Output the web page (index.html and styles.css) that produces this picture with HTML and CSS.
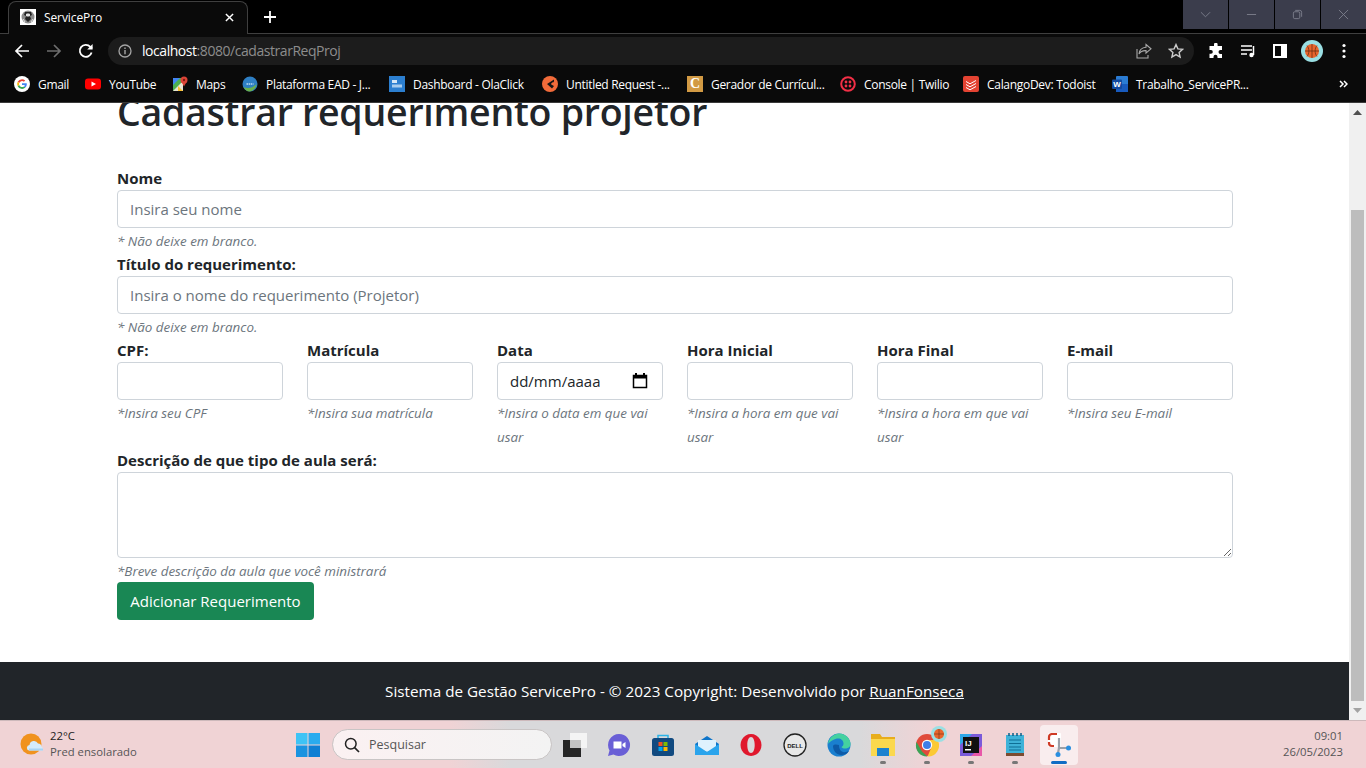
FILE: index.html
```html
<!DOCTYPE html>
<html lang="pt-BR">
<head>
    <meta charset="UTF-8">
    <meta name="viewport" content="width=device-width, initial-scale=1.0">
    <title>ServicePro</title>
    <link rel="stylesheet" href="styles.css">
</head>
<body>

    <!-- Browser tabs -->
    <div class="tabstrip">
        <div class="tab">
            <svg class="favicon" viewBox="0 0 16 16"><rect width="16" height="16" fill="#fff"/><circle cx="8" cy="8" r="6.500" fill="#8a8a8a"/><path d="M5 3h6l1 3-2 1 1 3-3 3-3-3 1-3-2-1z" fill="#222"/><path d="M6.500 5h3v2h-3zM3 10l2 3M13 10l-2 3" stroke="#e2e2e2" fill="#e2e2e2"/></svg>
            <span class="tab-title">ServicePro</span>
            <svg class="tab-close" viewBox="0 0 10 10"><path d="M1 1l8 8M9 1l-8 8" stroke="#fff" stroke-width="1.600"/></svg>
        </div>
        <svg class="new-tab" viewBox="0 0 12 12"><path d="M6 0v12M0 6h12" stroke="#fff" stroke-width="1.800"/></svg>
        <div class="window-btns">
            <div class="window-btn"><svg viewBox="0 0 12 12"><path d="M1 3.500l5 5 5-5" fill="none" stroke="#7d7f8c"/></svg></div>
            <div class="window-btn"><svg viewBox="0 0 12 12"><path d="M1 6h10" stroke="#7d7f8c"/></svg></div>
            <div class="window-btn"><svg viewBox="0 0 12 12"><rect x="1.500" y="3" width="7" height="7.500" rx="1.500" fill="none" stroke="#7d7f8c"/><path d="M3.500 1.500h5a2 2 0 0 1 2 2v5" fill="none" stroke="#7d7f8c"/></svg></div>
            <div class="window-btn"><svg viewBox="0 0 12 12"><path d="M1 1l10 10M11 1L1 11" stroke="#7d7f8c"/></svg></div>
        </div>
    </div>

    <!-- Address bar -->
    <div class="toolbar">
        <svg class="nav-icon" viewBox="0 0 16 16"><path d="M15 8H2M8 2L2 8l6 6" fill="none" stroke="#fff" stroke-width="1.700"/></svg>
        <svg class="nav-icon" viewBox="0 0 16 16"><path d="M1 8h13M8 2l6 6-6 6" fill="none" stroke="#6e6e6e" stroke-width="1.700"/></svg>
        <svg class="nav-icon" viewBox="0 0 16 16"><path d="M13.600 9.500A6 6 0 1 1 12.300 3.800L14 5.500" fill="none" stroke="#fff" stroke-width="1.800"/><path d="M14.600 1v5.400H9.200z" fill="#fff"/></svg>
        <div class="omnibox">
            <svg class="info-icon" viewBox="0 0 14 14"><circle cx="7" cy="7" r="6" fill="none" stroke="#a5a5a5" stroke-width="1.300"/><path d="M7 6v4.200M7 3.600v1.400" stroke="#a5a5a5" stroke-width="1.400"/></svg>
            <span class="url"><span class="url-host">localhost</span>:8080/cadastrarReqProj</span>
            <svg class="omni-icon" viewBox="0 0 16 16"><path d="M10 1.500l5 4.300-5 4.200V7.600C6.500 7.400 4.300 8.600 3 11c.3-3.600 2.800-6.300 7-6.700z M1 6v9h11v-3" fill="none" stroke="#a9a9a9" stroke-width="1.100"/></svg>
            <svg class="omni-icon" viewBox="0 0 16 16"><path d="M8 1.600l1.900 4.300 4.700.4-3.500 3.100 1 4.600L8 11.600 3.900 14l1-4.600L1.400 6.300l4.700-.4z" fill="none" stroke="#ccc" stroke-width="1.400"/></svg>
        </div>
        <div class="toolbar-right">
            <svg class="tool-icon" viewBox="0 0 16 16"><path d="M6 1.500a1.800 1.800 0 0 1 3.600 0V3H14v4h-1.500a2 2 0 0 0 0 4H14v4H9.500v-1.200a2 2 0 0 0-4 0V15H1.500v-4.300H3a1.800 1.800 0 0 0 0-3.600H1.500V3H6z" fill="#fff"/></svg>
            <svg class="tool-icon" viewBox="0 0 16 16"><path d="M1 3h11M1 7h11M1 11h6" stroke="#fff" stroke-width="1.500"/><path d="M13.500 3v9" stroke="#fff" stroke-width="1.500"/><circle cx="11.500" cy="12" r="2.200" fill="#fff"/></svg>
            <svg class="tool-icon" viewBox="0 0 16 16"><path d="M2 2h12v12H2z" fill="none" stroke="#fff" stroke-width="2"/><path d="M9 2h5v12H9z" fill="#fff"/></svg>
            <svg class="avatar" viewBox="0 0 22 22"><circle cx="11" cy="11" r="11" fill="#9adfe3"/><circle cx="11" cy="11" r="7" fill="#e8642c"/><path d="M4 11h14M11 4v14M6 5.500c2.500 3 2.500 8 0 11M16 5.500c-2.500 3-2.500 8 0 11" fill="none" stroke="#5b2a12" stroke-width=".7"/></svg>
            <svg class="tool-icon" viewBox="0 0 16 16"><circle cx="8" cy="2.500" r="1.600" fill="#fff"/><circle cx="8" cy="8" r="1.600" fill="#fff"/><circle cx="8" cy="13.500" r="1.600" fill="#fff"/></svg>
        </div>
    </div>

    <!-- Bookmarks -->
    <div class="bookmarks">
        <div class="bookmark bm-gmail">
            <svg viewBox="0 0 16 16"><circle cx="8" cy="8" r="8" fill="#fff"/><path d="M8 3.200a4.800 4.800 0 0 1 3.200 1.200L9.900 5.700A3 3 0 0 0 5.200 7L3.700 5.800A4.800 4.800 0 0 1 8 3.200z" fill="#ea4335"/><path d="M3.700 5.800L5.200 7a3 3 0 0 0 0 2L3.700 10.200a4.800 4.800 0 0 1 0-4.400z" fill="#fbbc05"/><path d="M5.200 9A3 3 0 0 0 10 10.400l1.400 1.100A4.800 4.800 0 0 1 3.700 10.200z" fill="#34a853"/><path d="M12.800 8c0 1.500-.5 2.600-1.400 3.500L10 10.400c.4-.3.700-.8.800-1.400H8V7.200h4.700c.1.300.1.500.1.800z" fill="#4285f4"/></svg>
            <span>Gmail</span>
        </div>
        <div class="bookmark bm-youtube">
            <svg viewBox="0 0 16 16"><rect y="2.500" width="16" height="11" rx="3" fill="#f00"/><path d="M6.500 5.500L11 8l-4.500 2.500z" fill="#fff"/></svg>
            <span>YouTube</span>
        </div>
        <div class="bookmark bm-maps">
            <svg viewBox="0 0 16 16"><path d="M1 2h10v13H1z" fill="#4caf50"/><path d="M1 15L11 5v10z" fill="#e8e3d3"/><path d="M6 10l5 5H6z" fill="#fbc02d"/><path d="M1 2h7L1 9z" fill="#4285f4"/><circle cx="12" cy="4" r="3.500" fill="#db4437"/><path d="M9.500 6l2.500 4.500L14.500 6z" fill="#db4437"/><circle cx="12" cy="4" r="1.200" fill="#7c1c12"/></svg>
            <span>Maps</span>
        </div>
        <div class="bookmark bm-ead">
            <svg viewBox="0 0 16 16"><circle cx="8" cy="8" r="7.500" fill="#2e7fc4"/><path d="M1.500 11c4 2 9 1.500 13-3-.5 4-3.500 7.500-7 7.500-2.500 0-4.800-2-6-4.500z" fill="#6ab04c"/><path d="M4.500 8h7" stroke="#bcdcf0" stroke-width="1.500" stroke-dasharray="1.500 .6"/></svg>
            <span>Plataforma EAD - J...</span>
        </div>
        <div class="bookmark bm-ola">
            <svg viewBox="0 0 16 16"><rect width="16" height="16" fill="#2c7fd0"/><rect x="3" y="4" width="5" height="3" fill="#d6e8f7"/><rect x="3" y="8.500" width="10" height="3" fill="#a9cdee"/></svg>
            <span>Dashboard - OlaClick</span>
        </div>
        <div class="bookmark bm-untitled">
            <svg viewBox="0 0 16 16"><circle cx="8" cy="8" r="8" fill="#f26b3a"/><path d="M12 3.500L5 8l5 4.500 2-2.500-3-2 3-2z" fill="#161616"/><path d="M11.500 5.500L9 8l2.500 1.700z" fill="#f26b3a"/></svg>
            <span>Untitled Request -...</span>
        </div>
        <div class="bookmark bm-gerador">
            <div class="letter-icon">C</div>
            <span>Gerador de Currícul...</span>
        </div>
        <div class="bookmark bm-console">
            <svg viewBox="0 0 16 16"><circle cx="8" cy="8" r="6.800" fill="none" stroke="#f22f46" stroke-width="2"/><circle cx="6" cy="6" r="1.400" fill="#f22f46"/><circle cx="10" cy="6" r="1.400" fill="#f22f46"/><circle cx="6" cy="10" r="1.400" fill="#f22f46"/><circle cx="10" cy="10" r="1.400" fill="#f22f46"/></svg>
            <span>Console | Twilio</span>
        </div>
        <div class="bookmark bm-calango">
            <svg viewBox="0 0 16 16"><rect width="16" height="16" rx="2" fill="#e44332"/><path d="M3 5.500l4 2.300 6-3.300M3 8.500l4 2.300 6-3.300M3 11.500l4 2.300 6-3.300" fill="none" stroke="#fff" stroke-width="1"/></svg>
            <span>CalangoDev: Todoist</span>
        </div>
        <div class="bookmark bm-word">
            <svg viewBox="0 0 16 16"><rect x="4" width="12" height="16" rx="1" fill="#2b7cd3"/><rect x="4" y="8" width="12" height="8" fill="#185abd"/><rect y="3.500" width="10" height="9.500" rx="1" fill="#124a9e"/><text x="5" y="11" class="word-letter">W</text></svg>
            <span>Trabalho_ServicePR...</span>
        </div>
        <svg class="more-bookmarks" viewBox="0 0 9 8"><path d="M1 1l3 3-3 3M5 1l3 3-3 3" fill="none" stroke="#fff" stroke-width="1.500"/></svg>
    </div>

    <!-- Page -->
    <div class="viewport">
        <div class="page">
            <div class="container">
                <h1>Cadastrar requerimento projetor</h1>

                <div class="field">
                    <label for="nome">Nome</label>
                    <input type="text" id="nome" placeholder="Insira seu nome">
                    <small>* Não deixe em branco.</small>
                </div>

                <div class="field">
                    <label for="titulo">Título do requerimento:</label>
                    <input type="text" id="titulo" placeholder="Insira o nome do requerimento (Projetor)">
                    <small>* Não deixe em branco.</small>
                </div>

                <div class="row">
                    <div class="field">
                        <label for="cpf">CPF:</label>
                        <input type="text" id="cpf">
                        <small>*Insira seu CPF</small>
                    </div>
                    <div class="field">
                        <label for="matricula">Matrícula</label>
                        <input type="text" id="matricula">
                        <small>*Insira sua matrícula</small>
                    </div>
                    <div class="field">
                        <label>Data</label>
                        <div class="date-input">
                            <span>dd/mm/aaaa</span>
                            <svg viewBox="0 0 16 16"><path d="M4 0v2M12 0v2" stroke="#000" stroke-width="2"/><path d="M1.500 2.500h13v12h-13z" fill="none" stroke="#000" stroke-width="1.500"/><path d="M1.500 3h13v2.500h-13z" fill="#000"/></svg>
                        </div>
                        <small>*Insira o data em que vai usar</small>
                    </div>
                    <div class="field">
                        <label for="horaInicial">Hora Inicial</label>
                        <input type="text" id="horaInicial">
                        <small>*Insira a hora em que vai usar</small>
                    </div>
                    <div class="field">
                        <label for="horaFinal">Hora Final</label>
                        <input type="text" id="horaFinal">
                        <small>*Insira a hora em que vai usar</small>
                    </div>
                    <div class="field">
                        <label for="email">E-mail</label>
                        <input type="text" id="email">
                        <small>*Insira seu E-mail</small>
                    </div>
                </div>

                <div class="field">
                    <label for="descricao">Descrição de que tipo de aula será:</label>
                    <textarea id="descricao"></textarea>
                    <small>*Breve descrição da aula que você ministrará</small>
                </div>

                <button class="btn">Adicionar Requerimento</button>
            </div>

            <footer class="footer">
                Sistema de Gestão ServicePro - © 2023 Copyright: Desenvolvido por&nbsp;<a href="#">RuanFonseca</a>
            </footer>
        </div>

        <div class="scrollbar">
            <svg class="scroll-arrow" viewBox="0 0 9 5"><path d="M4.500 0L9 5H0z" fill="#505050"/></svg>
            <div class="scroll-thumb"></div>
            <svg class="scroll-arrow" viewBox="0 0 9 5"><path d="M0 0h9L4.500 5z" fill="#a3a3a3"/></svg>
        </div>
    </div>

    <!-- Windows taskbar -->
    <div class="taskbar">
        <div class="weather">
            <svg viewBox="0 0 24 22"><circle cx="11" cy="11" r="10.500" fill="#f0921e"/><path d="M9 17.500a2.800 2.800 0 0 1 .5-5.500 4.500 4.500 0 0 1 8.500-1.500 3.500 3.500 0 0 1 3.500 3.500 2.200 2.200 0 0 1 1 3.500z" fill="#d4ebfc"/><path d="M9 15.500h14v2H9z" fill="#a8d4f5"/></svg>
            <div class="weather-text">
                <div class="temp">22°C</div>
                <div class="forecast">Pred ensolarado</div>
            </div>
        </div>

        <div class="task-btn">
            <svg class="win-logo" viewBox="0 0 24 24"><path d="M0 0h11.500v11.500H0z" fill="#3ec3f5"/><path d="M12.500 0H24v11.500H12.500z" fill="#2aabee"/><path d="M0 12.500h11.500V24H0z" fill="#1a93e0"/><path d="M12.500 12.500H24V24H12.500z" fill="#0f7fd3"/></svg>
        </div>

        <div class="search">
            <svg viewBox="0 0 16 16"><circle cx="6.800" cy="6.800" r="5.300" fill="none" stroke="#222" stroke-width="1.500"/><path d="M10.600 10.600L15 15" stroke="#222" stroke-width="1.700"/></svg>
            <span>Pesquisar</span>
        </div>

        <div class="task-icons">
            <div class="task-btn"><svg viewBox="0 0 24 24"><rect x="7" y="0" width="17" height="15" fill="#f4f4f4"/><rect x="0" y="7" width="18" height="17" fill="#262626"/><rect x="7" y="7" width="11" height="8" fill="#c4c4c4"/></svg></div>
            <div class="task-btn"><svg viewBox="0 0 24 24"><path d="M12 1a11 11 0 1 1-5.500 20.500L1 23l1.500-5.500A11 11 0 0 1 12 1z" fill="#6a5fd6"/><path d="M6.500 8.500h8v7h-8zM15.500 11l3-2v6l-3-2z" fill="#fff"/></svg></div>
            <div class="task-btn"><svg viewBox="0 0 24 24"><path d="M7 6V2.500h10V6" fill="none" stroke="#2bb4e8" stroke-width="1.500"/><rect x="1" y="5" width="22" height="18" rx="2.500" fill="#114a80"/><rect x="7.500" y="9" width="4" height="4" fill="#f25022"/><rect x="12.500" y="9" width="4" height="4" fill="#7fba00"/><rect x="7.500" y="14" width="4" height="4" fill="#00a4ef"/><rect x="12.500" y="14" width="4" height="4" fill="#ffb900"/></svg></div>
            <div class="task-btn"><svg viewBox="0 0 24 24"><path d="M12 3l12 8v11H0V11z" fill="#0f75c9"/><path d="M3 7h18v8l-9 4-9-4z" fill="#dff2fd"/><path d="M0 11l12 8 12-8v11H0z" fill="#2aa4ec"/></svg></div>
            <div class="task-btn"><svg viewBox="0 0 24 24"><path d="M12 1a10.500 11 0 1 0 .01 0zM12 4c2.300 0 3.700 3.500 3.700 8s-1.400 8-3.700 8-3.700-3.500-3.700-8 1.400-8 3.700-8z" fill="#e0182d" fill-rule="evenodd"/></svg></div>
            <div class="task-btn"><svg viewBox="0 0 24 24"><circle cx="12" cy="12" r="11" fill="#e8e8e8" stroke="#222" stroke-width="1.300"/><text x="12" y="14.500" class="dell-text">DELL</text></svg></div>
            <div class="task-btn"><svg viewBox="0 0 24 24"><circle cx="12" cy="12" r="11.500" fill="#1a7fcf"/><path d="M1 11C2 4 8 .5 12 .5c7 0 11.500 5.500 11.500 10.500 0 3-2.500 4.500-5.500 4.500-2 0-3.500-.7-3.500-1.500 1.500-1 2-2 2-3.500 0-3-2.500-5-5.500-5S3 8 1 11z" fill="#44d1a0"/><path d="M6 13c0 5 4 9 8 9 3 0 6-1 8-4-2 1-4 1.500-6 1-3-.7-4-4-4-7-3-1-6-.5-6 1z" fill="#0d5aa7"/></svg></div>
            <div class="task-btn running"><svg viewBox="0 0 24 24"><path d="M0 1h9l2 3h13v18H0z" fill="#e8ad1c"/><path d="M0 6h24v17H0z" fill="#fbd84e"/><path d="M6 15h12v8H6z" fill="#1c82cf"/></svg></div>
            <div class="task-btn running">
                <svg viewBox="0 0 24 24"><circle cx="12" cy="12" r="11" fill="#e04a3a"/><path d="M1.500 9l5.500 9.500 5.500 5A11 11 0 0 1 1.500 9z" fill="#3ca356"/><path d="M12 7h10.500A11 11 0 0 1 12.500 23.500L17 13z" fill="#fcc934"/><circle cx="12" cy="12" r="5.200" fill="#fff"/><circle cx="12" cy="12" r="4" fill="#3f7fe8"/></svg>
                <svg class="task-avatar" viewBox="0 0 16 16"><circle cx="8" cy="8" r="8" fill="#9adfe3"/><circle cx="8" cy="8" r="5" fill="#e8642c"/><path d="M3 8h10M8 3v10" stroke="#5b2a12" stroke-width=".5"/></svg>
            </div>
            <div class="task-btn running"><svg viewBox="0 0 24 24"><rect x="1" y="1" width="22" height="22" fill="#7a5ad9"/><path d="M1 1h12L1 12z" fill="#2fa8e8"/><path d="M23 23H12l11-10z" fill="#e857a8"/><rect x="4" y="4" width="16" height="16" fill="#111"/><text x="6" y="12.500" class="ij-text">IJ</text><rect x="6" y="16" width="6" height="1.500" fill="#fff"/></svg></div>
            <div class="task-btn running"><svg viewBox="0 0 24 24"><path d="M3 2h18v18H3z" fill="#3eb2d8"/><path d="M6 7h12M6 10.500h12M6 14h12M6 17h12" stroke="#0e6f96" stroke-width="1"/><path d="M6 0v3M10 0v3M14 0v3M18 0v3" stroke="#0e5f86" stroke-width="1.500"/><path d="M3 20h18v3H3z" fill="#7d4b30"/></svg></div>
            <div class="task-btn active">
                <svg viewBox="0 0 24 24"><rect x="1" y="0" width="13" height="14" rx="1" fill="#fff"/><path d="M2 7V4a3 3 0 0 1 3-3h5M2 9v1a3 3 0 0 0 3 3h2" fill="none" stroke="#cf3a25" stroke-width="2.200"/><path d="M12 5v10M12 15l-1 5M12 15h9" fill="none" stroke="#9aa0a8" stroke-width="2.200"/><circle cx="21.500" cy="15" r="2.500" fill="#2b8fe0"/><circle cx="11" cy="21.500" r="2.500" fill="#2b8fe0"/></svg>
            </div>
        </div>

        <div class="clock">
            <div>09:01</div>
            <div>26/05/2023</div>
        </div>
    </div>

</body>
</html>
```

FILE: styles.css
```css
* {
    box-sizing: border-box;
}
html, body {
    height: 100%;
}
body {
    margin: 0;
    height: 768px;
    overflow: hidden;
    display: flex;
    flex-direction: column;
    font-family: "Open Sans", "Noto Sans", sans-serif;
    background-color: #000;
}

/* browser tabs */
.tabstrip {
    height: 34px;
    flex: none;
    display: flex;
    align-items: flex-start;
    background-color: #000;
    border-bottom: 1px solid #3f3f3f;
}
.tab {
    width: 240px;
    height: 33px;
    margin: 1px 0 0 8px;
    padding: 0 13px 2px 11px;
    display: flex;
    align-items: center;
    background-color: #0a0a0a;
    border: 1px solid #3f3f3f;
    border-bottom: none;
    border-radius: 8px 8px 0 0;
    position: relative;
    z-index: 1;
}
.favicon {
    width: 16px;
    height: 16px;
}
.tab-title {
    margin-left: 8px;
    color: #fff;
    font-size: 12px;
    letter-spacing: -0.1px;
    flex: 1;
}
.tab-close {
    width: 9px;
    height: 9px;
}
.new-tab {
    width: 12px;
    height: 12px;
    margin: 11px 0 0 16px;
}
.window-btns {
    margin-left: auto;
    display: flex;
    gap: 1px;
}
.window-btn {
    width: 45px;
    height: 29px;
    display: flex;
    align-items: center;
    justify-content: center;
    background-color: #3b3d4c;
}
.window-btn svg {
    width: 11px;
    height: 11px;
}

/* address bar */
.toolbar {
    height: 33px;
    flex: none;
    display: flex;
    align-items: center;
    padding-left: 14px;
    gap: 16px;
    background-color: #0a0a0a;
}
.nav-icon {
    width: 16px;
    height: 16px;
}
.omnibox {
    width: 1086px;
    height: 28px;
    margin-left: -2px;
    padding: 0 10px;
    display: flex;
    align-items: center;
    background-color: #1c1c1c;
    border-radius: 14px;
    font-size: 14px;
}
.info-icon {
    width: 14px;
    height: 14px;
    margin-right: 10px;
}
.url {
    flex: 1;
    color: #8d8d8d;
    letter-spacing: -0.45px;
}
.url-host {
    color: #fff;
}
.omni-icon {
    width: 16px;
    height: 16px;
    margin-left: 16px;
}
.toolbar-right {
    display: flex;
    align-items: center;
    margin-left: -2px;
    gap: 16px;
}
.tool-icon {
    width: 16px;
    height: 16px;
}
.avatar {
    width: 22px;
    height: 22px;
    margin: 0 -3px;
}

/* bookmarks */
.bookmarks {
    height: 36px;
    flex: none;
    display: flex;
    align-items: center;
    padding-bottom: 1px;
    background-color: #0a0a0a;
    border-bottom: 1px solid #3a3a3a;
    color: #fff;
    font-size: 12px;
    letter-spacing: -0.3px;
}
.bookmark {
    display: flex;
    align-items: center;
    gap: 8px;
    white-space: nowrap;
    flex: none;
}
.bookmark svg, .letter-icon {
    width: 16px;
    height: 16px;
    flex: none;
}
.bm-gmail { margin-left: 14px; width: 71px; }
.bm-youtube { width: 87px; }
.bm-maps { width: 70px; }
.bm-ead { width: 147px; }
.bm-ola { width: 153px; }
.bm-untitled { width: 145px; }
.bm-gerador { width: 153px; }
.bm-console { width: 123px; }
.bm-calango { width: 149px; }
.bm-word { width: 227px; }
.letter-icon {
    background-color: #d29a44;
    color: #fff;
    font: bold 14px/16px "Liberation Serif", serif;
    text-align: center;
}
.word-letter {
    fill: #fff;
    font: bold 8px "Liberation Sans", sans-serif;
    text-anchor: middle;
}
.more-bookmarks {
    width: 9px;
    height: 8px;
}

/* page */
.viewport {
    flex: 1;
    min-height: 0;
    display: flex;
    background-color: #fff;
}
.page {
    flex: 1;
    min-width: 0;
    overflow: hidden;
    display: flex;
    flex-direction: column;
}
.container {
    flex: 1;
    padding: 0 116px 0 117px;
    color: #212529;
}
h1 {
    margin: -8px 0 37px;
    font-size: 37.5px;
    line-height: 34px;
    font-weight: 600;
    letter-spacing: -0.25px;
}
.field {
    display: flex;
    flex-direction: column;
    min-width: 0;
}
label {
    font-size: 15px;
    line-height: 24px;
    font-weight: 700;
}
input, textarea, .date-input {
    display: block;
    width: 100%;
    height: 38px;
    padding: 6px 12px;
    border: 1px solid #ced4da;
    border-radius: 4px;
    font-family: inherit;
    font-size: 15px;
    color: #212529;
    background-color: #fff;
}
input::placeholder {
    color: #6c757d;
    opacity: 1;
}
textarea {
    height: 86px;
    resize: vertical;
}
.date-input {
    display: flex;
    align-items: center;
    justify-content: space-between;
}
.date-input svg {
    width: 16px;
    height: 16px;
    margin-right: 2px;
}
small {
    padding-top: 1px;
    margin-bottom: -1px;
    font-size: 13.400px;
    line-height: 24px;
    font-style: italic;
    color: #6c757d;
}
.row {
    display: grid;
    grid-template-columns: repeat(6, 1fr);
    gap: 24px;
}
.btn {
    display: block;
    height: 38px;
    width: 197px;
    padding: 0;
    border: none;
    border-radius: 4px;
    background-color: #198754;
    color: #fff;
    font-family: inherit;
    font-size: 15px;
    cursor: pointer;
}
.footer {
    flex: none;
    height: 58px;
    display: flex;
    align-items: center;
    justify-content: center;
    padding-bottom: 1px;
    background-color: #212529;
    color: #fff;
    font-size: 15.250px;
}
.footer a {
    color: #fff;
}
.scrollbar {
    width: 17px;
    flex: none;
    display: flex;
    flex-direction: column;
    align-items: center;
    background-color: #f0f0f0;
}
.scroll-arrow {
    width: 9px;
    height: 5px;
    flex: none;
    margin: 7px 0;
}
.scroll-thumb {
    width: 13px;
    flex: 1;
    margin: 88px 0 0;
    background-color: #bdbdbd;
}

/* windows taskbar */
.taskbar {
    height: 48px;
    flex: none;
    display: flex;
    align-items: center;
    background: linear-gradient(90deg, #f0d3d5 0, #f0d3d5 450px, #d9d9db 510px, #d9d9db 860px, #f0d3d5 930px, #f0d3d5 100%);
    border-top: 1px solid #cdb9bb;
    font-size: 11.300px;
}
.weather {
    width: 286px;
    padding: 0 0 2px 20px;
    display: flex;
    align-items: center;
    gap: 6px;
}
.weather svg {
    width: 24px;
    height: 22px;
}
.weather-text {
    line-height: 16px;
}
.temp {
    color: #1c1c1c;
}
.forecast {
    color: #555;
}
.task-btn {
    width: 44px;
    height: 40px;
    flex: none;
    display: flex;
    align-items: center;
    justify-content: center;
    position: relative;
}
.task-btn svg {
    width: 24px;
    height: 24px;
}
.running::after, .active::after {
    content: "";
    position: absolute;
    left: 50%;
    bottom: 1px;
    width: 6px;
    height: 3px;
    margin-left: -3px;
    border-radius: 2px;
    background-color: #777;
}
.active {
    width: 38px;
    margin: 0 3px;
    background: rgba(255, 255, 255, 0.6);
    border-radius: 4px;
}
.active::after {
    width: 16px;
    margin-left: -8px;
    background-color: #0f6cc4;
}
.task-btn .task-avatar {
    position: absolute;
    top: 1px;
    right: 2px;
    width: 16px;
    height: 16px;
}
.search {
    width: 220px;
    height: 31px;
    margin-left: 2px;
    padding-left: 11px;
    display: flex;
    align-items: center;
    gap: 9px;
    border: 1px solid #c9c5c5;
    border-radius: 16px;
    background: linear-gradient(90deg, #fbf1f2, #f3f3f3);
    color: #555;
    font-size: 12.500px;
}
.search svg {
    width: 16px;
    height: 16px;
}
.task-icons {
    display: flex;
    margin-left: 1px;
}
.dell-text {
    font: bold 6px "Liberation Sans", sans-serif;
    fill: #222;
    text-anchor: middle;
}
.ij-text {
    font: bold 8px "Liberation Sans", sans-serif;
    fill: #fff;
}
.clock {
    margin-left: auto;
    padding: 0 23px 2px 0;
    text-align: right;
    color: #555;
    line-height: 16px;
}
```
